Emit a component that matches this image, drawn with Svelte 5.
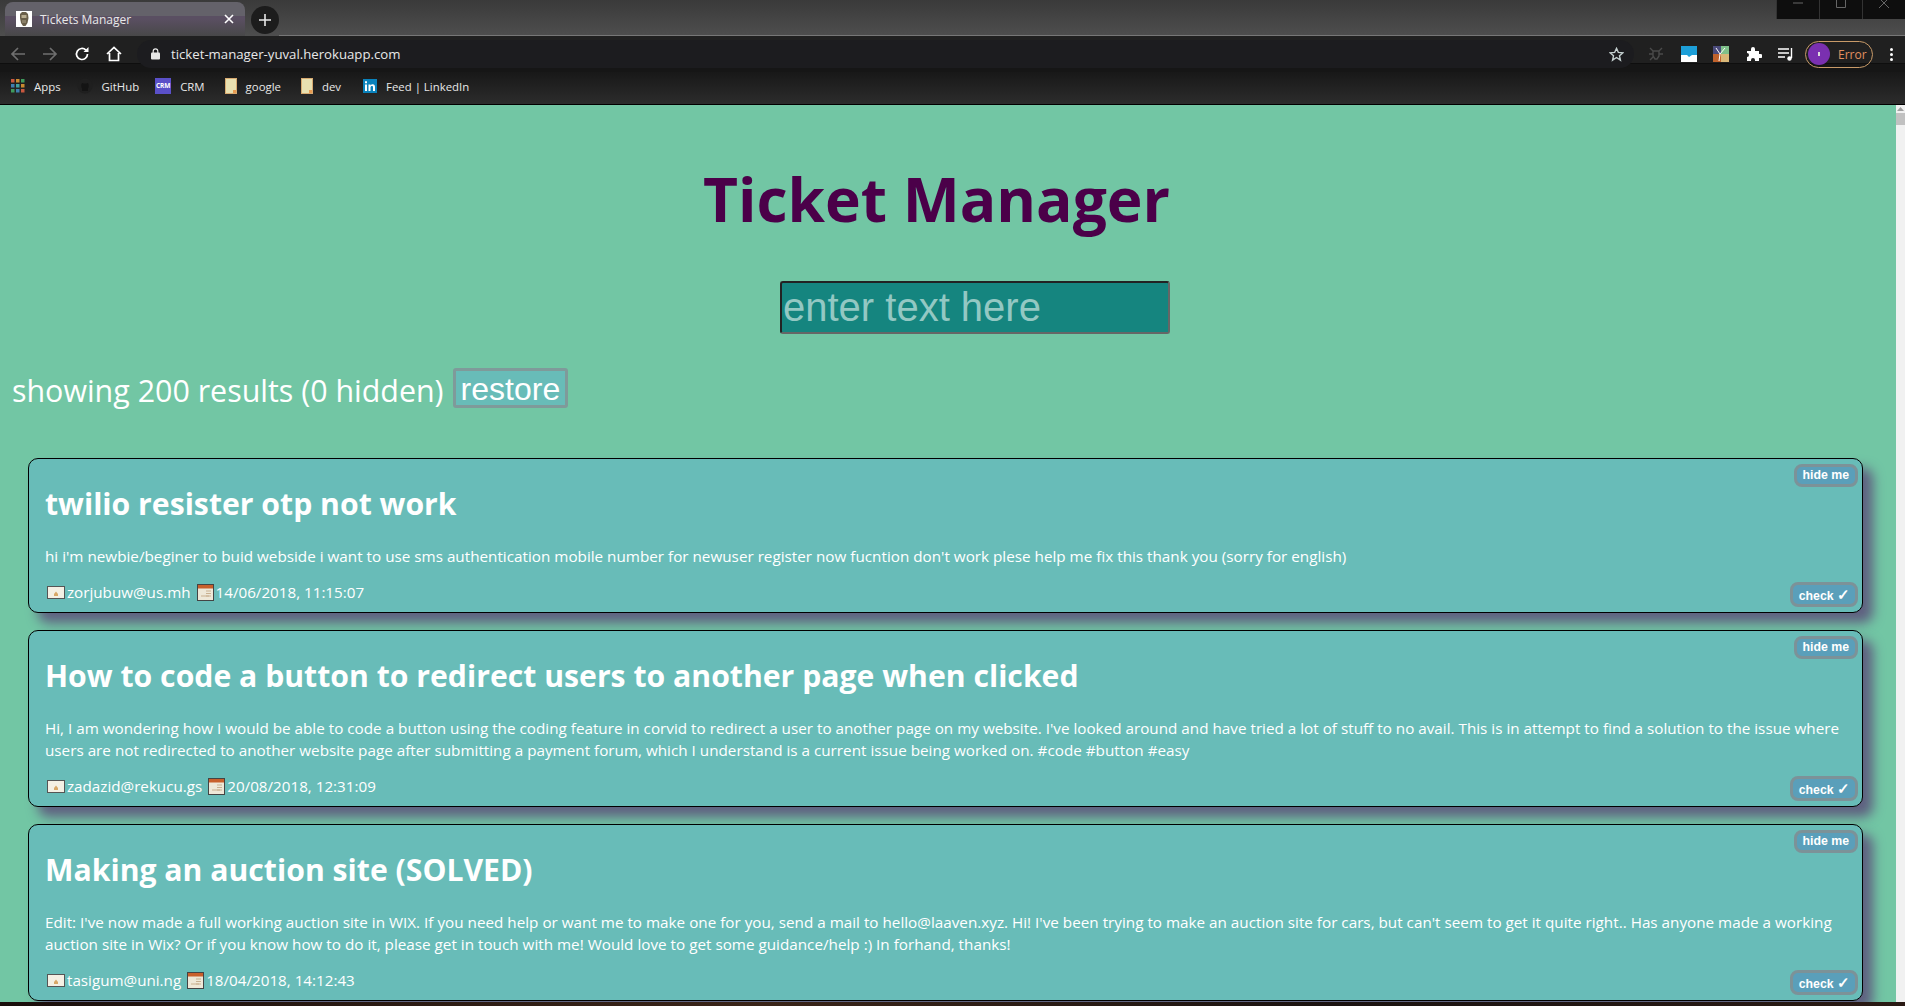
<script>
	const tickets = [
		{
			title: 'twilio resister otp not work',
			content: "hi i'm newbie/beginer to buid webside i want to use sms authentication mobile number for newuser register now fucntion don't work plese help me fix this thank you (sorry for english)",
			email: 'zorjubuw@us.mh',
			date: '14/06/2018, 11:15:07'
		},
		{
			title: 'How to code a button to redirect users to another page when clicked',
			content: "Hi, I am wondering how I would be able to code a button using the coding feature in corvid to redirect a user to another page on my website. I've looked around and have tried a lot of stuff to no avail. This is in attempt to find a solution to the issue where users are not redirected to another website page after submitting a payment forum, which I understand is a current issue being worked on. #code #button #easy",
			email: 'zadazid@rekucu.gs',
			date: '20/08/2018, 12:31:09'
		},
		{
			title: 'Making an auction site (SOLVED)',
			content: "Edit: I've now made a full working auction site in WIX. If you need help or want me to make one for you, send a mail to hello@laaven.xyz. Hi! I've been trying to make an auction site for cars, but can't seem to get it quite right.. Has anyone made a working auction site in Wix? Or if you know how to do it, please get in touch with me! Would love to get some guidance/help :) In forhand, thanks!",
			email: 'tasigum@uni.ng',
			date: '18/04/2018, 14:12:43'
		}
	];

	const bookmarks = [
		{ label: 'Apps', icon: 'apps' },
		{ label: 'GitHub', icon: 'github' },
		{ label: 'CRM', icon: 'crm' },
		{ label: 'google', icon: 'folder' },
		{ label: 'dev', icon: 'folder' },
		{ label: 'Feed | LinkedIn', icon: 'linkedin' }
	];
</script>

<div class="window">
	<header class="chrome">
		<div class="tabstrip">
			<div class="tab">
				<span class="favicon">
					<svg width="16" height="16" viewBox="0 0 16 16"><rect width="16" height="16" fill="#fff" /><path d="M4 3l2-2h4l2 2 .5 4-1 5-2 3H7l-2-3-1-5z" fill="#6a5f4a" /><path d="M5.500 4h5v3h-5z" fill="#b9ad90" /><path d="M6 9h4v3H6z" fill="#8a7f68" /></svg>
				</span>
				<span class="tab-title">Tickets Manager</span>
				<svg class="tab-close" width="10" height="10" viewBox="0 0 10 10"><path d="M1 1l8 8M9 1l-8 8" stroke="#fff" stroke-width="1.6" /></svg>
			</div>
			<div class="new-tab">
				<svg width="12" height="12" viewBox="0 0 12 12"><path d="M6 0v12M0 6h12" stroke="#e8e8e8" stroke-width="1.6" /></svg>
			</div>
			<div class="strip-line"></div>
			<div class="win-controls">
				<span><svg width="10" height="10" viewBox="0 0 10 10"><path d="M0 5h10" stroke="#666" /></svg></span>
				<span><svg width="10" height="10" viewBox="0 0 10 10"><path d="M.5 .5h9v9h-9z" stroke="#666" fill="none" /></svg></span>
				<span><svg width="10" height="10" viewBox="0 0 10 10"><path d="M0 0l10 10M10 0L0 10" stroke="#666" /></svg></span>
			</div>
		</div>
		<div class="toolbar">
			<svg class="nav" width="16" height="16" viewBox="0 0 16 16"><path d="M15 8H2M8 2L2 8l6 6" stroke="#6f6f6f" stroke-width="1.7" fill="none" /></svg>
			<svg class="nav" width="16" height="16" viewBox="0 0 16 16"><path d="M1 8h13M8 2l6 6-6 6" stroke="#6f6f6f" stroke-width="1.7" fill="none" /></svg>
			<svg class="nav" width="16" height="16" viewBox="0 0 16 16"><path d="M13.500 8a5.500 5.500 0 1 1-1.600-3.900" stroke="#fff" stroke-width="1.7" fill="none" /><path d="M14.500 1v5h-5z" fill="#fff" /></svg>
			<svg class="nav" width="16" height="16" viewBox="0 0 16 16"><path d="M1 8l7-6.500L15 8M3.500 7v7.500h9V7" stroke="#fff" stroke-width="1.7" fill="none" /></svg>
			<div class="omnibox">
				<svg width="10" height="12" viewBox="0 0 10 12"><rect y="4.500" width="9" height="7" rx="1" fill="#e8e8e8" /><path d="M2.200 5V3.200a2.300 2.300 0 0 1 4.600 0V5" stroke="#e8e8e8" fill="none" stroke-width="1.2" /></svg>
				<span class="url">ticket-manager-yuval.herokuapp.com</span>
				<svg class="star" width="15" height="15" viewBox="0 0 16 16"><path d="M8 1.500l2 4.300 4.600.5-3.400 3.100 1 4.600L8 11.200l-4.200 2.800 1-4.600L1.400 6.300l4.600-.5z" stroke="#c4d0d0" stroke-width="1.5" fill="none" /></svg>
			</div>
			<div class="ext">
				<svg width="16" height="16" viewBox="0 0 16 16"><path d="M5 5h6v5l-2 3H7L5 10zM2 2l3 3M14 2l-3 3M1 8h4M15 8h-4M2 14l3-3" stroke="#4a4a4a" stroke-width="1.4" fill="none" /></svg>
				<svg width="16" height="16" viewBox="0 0 16 16"><rect width="16" height="16" fill="#1d9fd8" /><path d="M0 9h6l2 2 3-2h5v7H0z" fill="#fff" /></svg>
				<svg width="16" height="16" viewBox="0 0 16 16"><rect width="8" height="8" fill="#4a4a7a" /><rect x="8" width="8" height="8" fill="#7fc08a" /><rect y="8" width="8" height="8" fill="#c0622c" /><rect x="8" y="8" width="8" height="8" fill="#d9b878" /><path d="M3 2l4 6-1 7M12 2L7 8" stroke="#fff" fill="none" /></svg>
				<svg width="16" height="16" viewBox="0 0 16 16"><path d="M1 5h4V3a2 2 0 0 1 4 0v2h4v3h1.500a2 2 0 0 1 0 4H13v3H9v-1a2 2 0 0 0-4 0v1H1v-4a2 2 0 0 0 0-4z" fill="#fff" /></svg>
				<svg width="16" height="16" viewBox="0 0 16 16"><path d="M0 3h11M0 7h11M0 11h7" stroke="#fff" stroke-width="1.4" /><path d="M13.500 2v10" stroke="#fff" stroke-width="1.4" /><circle cx="11.500" cy="12.500" r="2.200" fill="#fff" /></svg>
			</div>
			<div class="profile">
				<span class="avatar"><i></i></span>
				<span>Error</span>
			</div>
			<div class="menu-dots"><i></i><i></i><i></i></div>
		</div>
		<div class="bookmarks">
			{#each bookmarks as b}
				<div class="bookmark {b.icon}">
					{#if b.icon === 'apps'}
						<svg width="14" height="14" viewBox="0 0 14 14">
							{#each [0, 5, 10] as y, r}
								{#each [0, 5, 10] as x, c}
									<rect {x} {y} width="3.500" height="3.500" fill={['#c9583f', '#c98a30', '#3f9a5c', '#3f7fb0', '#3fa0a0', '#c98a30', '#3f9a5c', '#3f7fb0', '#c9583f'][r * 3 + c]} />
								{/each}
							{/each}
						</svg>
					{:else if b.icon === 'github'}
						<svg width="16" height="16" viewBox="0 0 16 16"><circle cx="8" cy="8" r="7.500" fill="#1f1f1f" /><path d="M5 13v-2.500C4 9.500 4 6 5 5l1.500.5h3L11 5c1 1 1 4.500 0 5.500V13" fill="#141414" /></svg>
					{:else if b.icon === 'crm'}
						<span class="crm-icon">CRM</span>
					{:else if b.icon === 'folder'}
						<svg width="12" height="16" viewBox="0 0 12 16"><rect x=".5" y=".5" width="11" height="15" fill="#e8e0b0" stroke="#d8aa70" /><rect x="8" y="12" width="3" height="3" fill="#e89a50" /></svg>
					{:else}
						<svg width="14" height="14" viewBox="0 0 14 14"><rect width="14" height="14" fill="#0a82bc" /><path d="M2 5.500h2V12H2zM2 2.200h2v2H2zM5.500 5.500h2v1c.5-.8 1.300-1.200 2.200-1.200 1.700 0 2.300 1.100 2.300 2.800V12h-2V8.500c0-.9-.3-1.400-1.100-1.400s-1.400.6-1.400 1.500V12h-2z" fill="#fff" /></svg>
					{/if}
					<span>{b.label}</span>
				</div>
			{/each}
		</div>
	</header>

	<div class="viewport">
		<main class="page">
			<h1>Ticket Manager</h1>
			<div class="search-row">
				<input class="search" placeholder="enter text here" />
			</div>
			<div class="results">
				<span>showing 200 results (0 hidden)</span>
				<button class="restore">restore</button>
			</div>
			<div class="tickets">
				{#each tickets as t}
					<article class="ticket">
						<div class="ticket-top"><button class="small hide">hide me</button></div>
						<h2>{t.title}</h2>
						<p>{t.content}</p>
						<div class="ticket-foot">
							<div class="meta">
								<svg width="18" height="13" viewBox="0 0 18 13"><rect x=".5" y=".5" width="17" height="12" fill="#f4f0e4" stroke="#555" /><path d="M7 8l2-2.500L11 8v2H7z" fill="#d8a868" /></svg>
								<span>{t.email}</span>
								<svg class="cal" width="17" height="17" viewBox="0 0 17 17"><rect x=".5" y=".5" width="16" height="16" fill="#eee8d8" stroke="#444" /><rect x="1" y="1" width="15" height="3.500" fill="#c8602c" /><path d="M9 7h5M9 9.500h5M9 12h5M4 12h8" stroke="#c8b090" /></svg>
								<span>{t.date}</span>
							</div>
							<button class="small check">check <span class="tick">✓</span></button>
						</div>
					</article>
				{/each}
			</div>
		</main>
		<div class="scrollbar">
			<svg width="9" height="8" viewBox="0 0 9 8"><path d="M4.500 2L8 6H1z" fill="#a0a0a0" /></svg>
			<div class="thumb"></div>
		</div>
	</div>
	<div class="wallpaper"></div>
</div>

<style>
	:global(body) {
		margin: 0;
		overflow: hidden;
	}
	.window {
		display: flex;
		flex-direction: column;
		height: 1006px;
		overflow: hidden;
		font-family: "Open Sans", sans-serif;
		background: #1a1210;
	}

	/* browser chrome */
	.chrome {
		flex: none;
		height: 105px;
		font-family: "Open Sans", sans-serif;
		background: #202020;
		color: #e8e8e8;
		box-sizing: border-box;
		border-bottom: 1px solid #000;
	}
	.tabstrip {
		height: 36px;
		display: flex;
		align-items: flex-end;
		position: relative;
		background: linear-gradient(#3a3a3a, #4e4e4e);
	}
	.tab {
		width: 240px;
		height: 34px;
		margin-left: 5px;
		box-sizing: border-box;
		padding: 0 11px;
		display: flex;
		align-items: center;
		gap: 8px;
		border-radius: 8px 8px 0 0;
		background: linear-gradient(#64626a 0 40%, #5a4f62 40% 50%, #484848);
		font-size: 12px;
	}
	.favicon { display: flex; }
	.tab-title { flex: 1; }
	.new-tab {
		width: 28px;
		height: 28px;
		margin: 0 0 2px 6px;
		border-radius: 50%;
		background: #1c1c1c;
		display: flex;
		align-items: center;
		justify-content: center;
	}
	.strip-line {
		flex: 1;
		border-bottom: 1px solid #777;
	}
	.win-controls {
		position: absolute;
		right: 0;
		top: 0;
		display: flex;
		height: 19px;
		background: #0e0e0e;
		overflow: hidden;
	}
	.win-controls span {
		width: 42px;
		display: flex;
		align-items: flex-start;
		justify-content: center;
		border-left: 1px solid #333;
	}
	.win-controls svg { margin-top: -2px; }
	.toolbar {
		height: 36px;
		box-sizing: border-box;
		display: flex;
		align-items: center;
		padding: 0 6px 0 10px;
		gap: 16px;
		background: linear-gradient(#202020 0 27px, #0e0e0e 27px 28px, #161616 28px);
	}
	.nav { flex: none; }
	.omnibox {
		flex: 1;
		height: 28px;
		margin-left: -1px;
		padding: 0 10px 0 14px;
		border-radius: 14px;
		background: #1c1c1f;
		display: flex;
		align-items: center;
		gap: 10px;
		font-size: 13.2px;
	}
	.url { flex: 1; }
	.ext {
		display: flex;
		gap: 16.5px;
		margin-left: -2px;
	}
	.profile {
		width: 68px;
		height: 27px;
		box-sizing: border-box;
		margin-left: -5px;
		padding-left: 2px;
		display: flex;
		align-items: center;
		gap: 8px;
		border: 1px solid #c89a68;
		border-radius: 14px;
		color: #e09060;
		font-size: 12px;
	}
	.avatar {
		width: 22px;
		height: 22px;
		border-radius: 50%;
		background: #7a30b0;
		display: flex;
		align-items: center;
		justify-content: center;
	}
	.avatar i {
		width: 2px;
		height: 4px;
		background: #ddd;
	}
	.menu-dots {
		width: 16px;
		margin-left: -6px;
		display: flex;
		flex-direction: column;
		align-items: center;
		gap: 2px;
	}
	.menu-dots i {
		width: 3px;
		height: 3px;
		background: #fff;
		border-radius: 50%;
	}
	.bookmarks {
		height: 32px;
		box-sizing: border-box;
		padding: 0 0 4px 11px;
		display: flex;
		align-items: center;
		gap: 16px;
		font-size: 11.4px;
		background: linear-gradient(#181818, #2c2c2c);
	}
	.bookmark {
		display: flex;
		align-items: center;
		gap: 9px;
	}
	.bookmark.folder { margin-left: 4px; }
	.bookmark.linkedin { margin-left: 6px; }
	.crm-icon {
		width: 16px;
		height: 16px;
		background: #5a50c8;
		color: #fff;
		font-size: 6.5px;
		font-weight: 700;
		line-height: 16px;
		text-align: center;
	}

	/* page */
	.viewport {
		flex: none;
		height: 897px;
		display: flex;
		overflow: hidden;
	}
	.page {
		flex: 1;
		min-width: 0;
		background: #72c6a4;
		overflow: hidden;
	}
	h1 {
		margin: 56px 0 0;
		padding-right: 23px;
		text-align: center;
		color: #4b0049;
		font-size: 60.5px;
		line-height: 76px;
		font-weight: 700;
	}
	.search-row {
		display: flex;
		justify-content: center;
		margin-top: 44px;
		padding-left: 54px;
	}
	.search {
		width: 390px;
		height: 53px;
		box-sizing: border-box;
		padding: 0 1px;
		border: 2px solid;
		border-color: #222 #666 #666 #222;
		border-radius: 3px;
		background: #15857f;
		font-family: "Liberation Sans", sans-serif;
		font-size: 40px;
		color: #fff;
	}
	.search::placeholder { color: #93c8c3; opacity: 1; }
	.results {
		height: 40px;
		margin-top: 34px;
		padding-left: 12px;
		display: flex;
		align-items: flex-start;
		gap: 9px;
		font-size: 30.4px;
		line-height: 46px;
		color: #fff;
	}
	.restore {
		height: 40px;
		box-sizing: border-box;
		padding: 2px 5px 0;
		border: 3px solid #7f9a9a;
		border-radius: 3px;
		background: #68bcb8;
		color: #fff;
		font-family: "Liberation Sans", sans-serif;
		font-size: 32px;
		line-height: 1;
	}
	.tickets {
		margin-top: 50px;
		padding: 0 33px 0 28px;
		display: flex;
		flex-direction: column;
		gap: 17px;
	}
	.ticket {
		flex: none;
		box-sizing: border-box;
		padding: 4px 4px 5px 16px;
		border: 1px solid #000;
		border-radius: 10px;
		background: #68bcb8;
		box-shadow: 10px 10px 12px #5f6080;
		color: #fff;
	}
	.ticket-top {
		display: flex;
		justify-content: flex-end;
		height: 19px;
	}
	.hide { margin-top: 1px; }
	h2 {
		margin: 1px 0 0;
		font-size: 30.2px;
		line-height: 42px;
		font-weight: 700;
	}
	p {
		margin: 20px 0 0;
		padding-right: 10px;
		font-size: 15.25px;
		line-height: 22px;
	}
	.ticket-foot {
		display: flex;
		justify-content: space-between;
		align-items: center;
		margin-top: 15px;
	}
	.meta {
		display: flex;
		align-items: center;
		padding: 0 0 5px 2px;
		font-size: 15.2px;
	}
	.meta svg { margin-right: 2px; }
	.cal { margin-left: 6px; }
	.small {
		height: 23px;
		box-sizing: border-box;
		padding: 0 6px;
		border: 3px solid #7c9298;
		border-radius: 8px;
		background: #5a9fba;
		color: #fff;
		font-family: "Liberation Sans", sans-serif;
		font-size: 12.3px;
		font-weight: 700;
		line-height: 1;
	}
	.check { height: 25px; padding: 0 5px 0 6px; }
	.tick { font-size: 15px; line-height: 1; }
	.scrollbar {
		flex: none;
		width: 9px;
		background: #f1f1f1;
		display: flex;
		flex-direction: column;
	}
	.thumb {
		height: 12px;
		background: #c1c1c1;
	}
	.wallpaper {
		flex: 1;
		background: linear-gradient(90deg, #1a0f0c, #3a2418 40%, #1a1210 70%, #2a1a14);
	}
</style>
